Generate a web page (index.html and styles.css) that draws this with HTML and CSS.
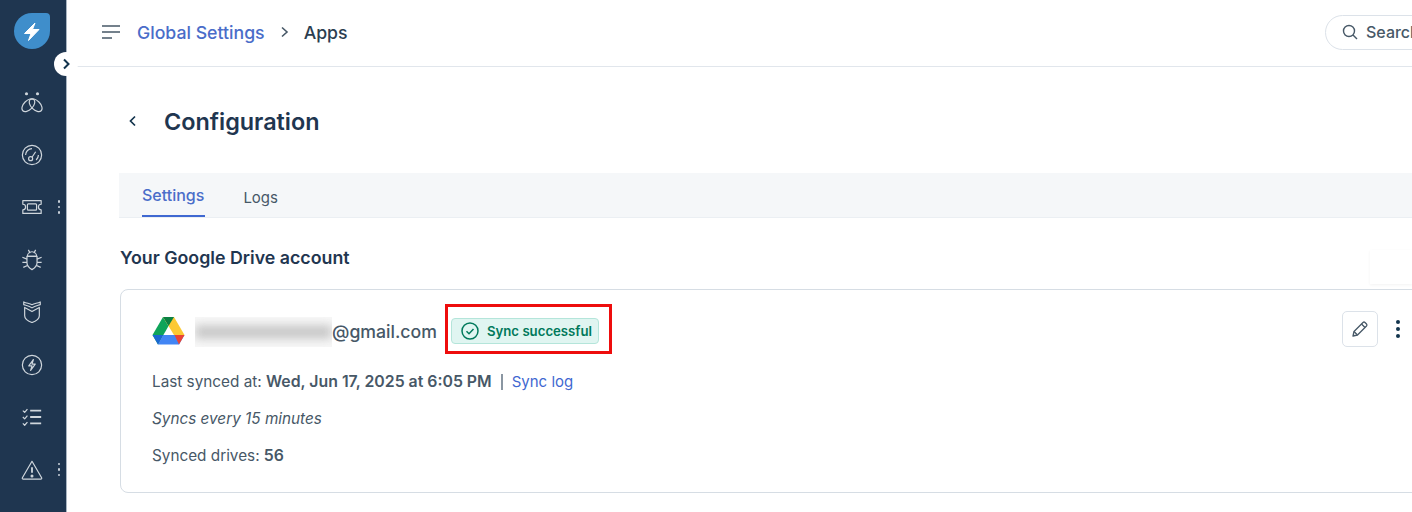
FILE: index.html
```html
<!DOCTYPE html>
<html lang="en">
<head>
    <meta charset="UTF-8">
    <title>Configuration</title>
    <link rel="stylesheet" href="styles.css">
</head>
<body>
    <div class="app">
        <aside class="sidebar">
            <svg class="logo" width="36" height="36" viewBox="0 0 36 36">
                <path d="M18 0h14a4 4 0 0 1 4 4v14a18 18 0 1 1-18-18z" fill="#3f8ecb"/>
                <path d="M21 10l-10.500 10.500h6.500l-2.500 7 10.500-11h-6.500z" fill="#fff" stroke="#fff" stroke-width="1" stroke-linejoin="round"/>
            </svg>
            <nav class="nav">
                <div class="nav-item">
                    <svg viewBox="0 0 24 24"><circle cx="6" cy="3" r="1.700" fill="currentColor" stroke="none"/><circle cx="18" cy="3" r="1.700" fill="currentColor" stroke="none"/><ellipse cx="8" cy="15.500" rx="8.500" ry="5" transform="rotate(-45 8 15.500)"/><ellipse cx="16" cy="15.500" rx="8.500" ry="5" transform="rotate(45 16 15.500)"/></svg>
                </div>
                <div class="nav-item">
                    <svg viewBox="0 0 24 24"><circle cx="12" cy="12" r="10.500"/><path d="M5 12a7 7 0 0 1 7-7M19 12c0 2-1 4-2.500 5.500"/><circle cx="10.500" cy="16" r="2.200"/><path d="M12 14.500l4-6"/></svg>
                </div>
                <div class="nav-item has-more">
                    <svg viewBox="0 0 24 24"><path d="M2 5h20v4a3 3 0 0 0 0 6v4H2v-4a3 3 0 0 0 0-6z"/><rect x="7" y="8.500" width="10" height="7" rx="1"/></svg>
                    <span class="more"><i></i><i></i><i></i></span>
                </div>
                <div class="nav-item">
                    <svg viewBox="0 0 24 24"><path d="M8 1l2 3.500M16 1l-2 3.500"/><path d="M7 8a5 5 0 0 1 10 0z"/><path d="M6.500 8h11v7c0 4-3 6-5.500 7.500C9.500 21 6.500 19 6.500 15z"/><path d="M6.500 11L1.500 9M17.500 11L22.500 9M6.500 14.500H1.500M17.500 14.500H22.500M7 18l-4.500 2M17 18l4.500 2"/></svg>
                </div>
                <div class="nav-item">
                    <svg viewBox="0 0 24 24"><path d="M3 1c3 1.500 6 1.500 9 3 3-1.500 6-1.500 9-3v3c-3 1-6 1.500-9 3.500C9 5.500 6 5 3 4z"/><path d="M4 7v9c0 3 4 6 8 7.500 4-1.500 8-4.500 8-7.500V7l-8 4.500z"/></svg>
                </div>
                <div class="nav-item">
                    <svg viewBox="0 0 24 24"><circle cx="12" cy="12" r="10.500"/><path d="M13.500 6l-5 7h3.500l-1.500 5 5-7H12z"/></svg>
                </div>
                <div class="nav-item">
                    <svg viewBox="0 0 24 24"><path d="M2 5l2 2 3-3.500M2 12l2 2 3-3.500M2 19l2 2 3-3.500"/><path d="M10 5h12M10 12h12M10 19h12" stroke-width="2"/></svg>
                </div>
                <div class="nav-item has-more">
                    <svg viewBox="0 0 24 24"><path d="M12 2.500L1.500 20.500a1 1 0 0 0 1 1.500h19a1 1 0 0 0 1-1.500z"/><path d="M12 9v6" stroke-width="2"/><circle cx="12" cy="18.500" r="1" fill="currentColor"/></svg>
                    <span class="more"><i></i><i></i><i></i></span>
                </div>
            </nav>
        </aside>
        <button class="toggle">
            <svg width="10" height="12" viewBox="0 0 10 12"><path d="M3 1.500L7.500 6 3 10.500" fill="none" stroke="#12344d" stroke-width="2"/></svg>
        </button>

        <div class="content">
            <header class="topbar">
                <svg class="menu-icon" width="20" height="16" viewBox="0 0 20 16"><path d="M1 2h18M1 8h18M1 14h10" fill="none" stroke="#475867" stroke-width="1.600"/></svg>
                <a class="crumb-link">Global Settings</a>
                <svg class="crumb-sep" width="10" height="12" viewBox="0 0 10 12"><path d="M2 1.500L7 6l-5 4.500" fill="none" stroke="#475867" stroke-width="1.600"/></svg>
                <span class="crumb-current">Apps</span>
                <div class="search">
                    <svg width="16" height="16" viewBox="0 0 16 16"><circle cx="7" cy="7" r="5.500" fill="none" stroke="#475867" stroke-width="1.400"/><path d="M11 11l4 4" stroke="#475867" stroke-width="1.400"/></svg>
                    <span>Search</span>
                </div>
            </header>

            <main class="main">
                <div class="page-title">
                    <svg width="10" height="12" viewBox="0 0 10 12"><path d="M7 1.500L2.500 6 7 10.500" fill="none" stroke="#12344d" stroke-width="1.700"/></svg>
                    <h1>Configuration</h1>
                </div>

                <div class="tabs">
                    <a class="tab active">Settings</a>
                    <a class="tab">Logs</a>
                </div>

                <h2>Your Google Drive account</h2>

                <section class="card">
                    <div class="account-row">
                        <svg class="drive" width="33" height="29" viewBox="0 0 33 29">
                            <path d="M11 1L.5 19l5.500 9.500L16.500 10z" fill="#0fa45a"/>
                            <path d="M11 1h11l10.500 18H22L16.500 10z" fill="#fcc934"/>
                            <path d="M11 1h11l-5.500 9z" fill="#0b8043"/>
                            <path d="M6 28.500L11 19h21.500l-5.500 9.500z" fill="#4285f4"/>
                            <path d="M.5 19H11l-5 9.500z" fill="#1967d2"/>
                            <path d="M32.500 19H22.500l4.500 9.500z" fill="#ea4335"/>
                        </svg>
                        <span class="masked"><span class="smear"></span></span>
                        <span class="email">@gmail.com</span>
                        <div class="highlight">
                            <span class="badge">
                                <svg width="18" height="18" viewBox="0 0 18 18"><circle cx="9" cy="9" r="8" fill="none" stroke="#00795b" stroke-width="1.500"/><path d="M5.500 9.300l2.500 2.400 4.500-4.700" fill="none" stroke="#00795b" stroke-width="1.500"/></svg>
                                Sync successful
                            </span>
                        </div>
                        <div class="actions">
                            <button class="edit">
                                <svg width="18" height="18" viewBox="0 0 18 18"><path d="M2 16l1-4.500L12 2.500a1.500 1.500 0 0 1 2 0l1.500 1.500a1.500 1.500 0 0 1 0 2L6.500 15z" fill="none" stroke="#475867" stroke-width="1.300" stroke-linejoin="round"/><path d="M10.500 4l3.500 3.500M3 11.500L6.500 15" fill="none" stroke="#475867" stroke-width="1.300"/></svg>
                            </button>
                            <span class="kebab"><i></i><i></i><i></i></span>
                        </div>
                    </div>
                    <p class="line">Last synced at: <b>Wed, Jun 17, 2025 at 6:05 PM</b><span class="sep"></span><a class="link">Sync log</a></p>
                    <p class="line"><em>Syncs every 15 minutes</em></p>
                    <p class="line">Synced drives: <b>56</b></p>
                </section>
            </main>
        </div>
        <div class="ghost"></div>
    </div>
</body>
</html>
```

FILE: styles.css
```css
html, body {
    margin: 0;
    height: 100%;
    background: #fff;
    overflow: hidden;
}

body {
    font-family: Inter, "Liberation Sans", sans-serif;
    color: #12344d;
}

.app {
    display: flex;
    height: 512px;
    position: relative;
}

.sidebar {
    width: 66px;
    flex-shrink: 0;
    background: #1f3650;
    border-right: 1px solid #a9b5c2;
    display: flex;
    flex-direction: column;
    align-items: center;
    padding-top: 13px;
}

.logo {
    display: block;
    margin-right: 3px;
}

.nav {
    display: flex;
    flex-direction: column;
    gap: 30.5px;
    margin-top: 42px;
    width: 100%;
}

.nav-item {
    height: 22px;
    padding-right: 3px;
    display: flex;
    align-items: center;
    justify-content: center;
    position: relative;
    color: #cfd6dc;
}

.nav-item svg {
    width: 22px;
    height: 22px;
    fill: none;
    stroke: currentColor;
    stroke-width: 1.3;
    stroke-linejoin: round;
}

.more {
    position: absolute;
    right: 6px;
    top: 4px;
    display: flex;
    flex-direction: column;
    gap: 3px;
}

.more i {
    display: block;
    width: 2.5px;
    height: 2.5px;
    border-radius: 50%;
    background: #c8d0d8;
}

.toggle {
    position: absolute;
    left: 54px;
    top: 52px;
    width: 24px;
    height: 24px;
    padding: 0;
    border: none;
    border-radius: 50%;
    background: #fff;
    display: flex;
    align-items: center;
    justify-content: center;
}

.ghost {
    position: absolute;
    right: 0;
    top: 250px;
    width: 42px;
    height: 34px;
    background: #fff;
    box-shadow: 0 1px 3px rgba(0, 0, 0, 0.05);
}

.content {
    flex: 1;
    min-width: 0;
}

.topbar {
    height: 64px;
    margin-left: 10px;
    border-bottom: 1px solid #e1e6ec;
    display: flex;
    align-items: center;
    padding: 0 0 2px 24px;
}

.menu-icon {
    margin-right: 16px;
}

.crumb-link {
    font-size: 17.7px;
    font-weight: 500;
    color: #4a6dc9;
}

.crumb-sep {
    margin: 0 14px 0 15px;
}

.crumb-current {
    font-size: 17.7px;
    font-weight: 500;
    color: #2c3e50;
}

.search {
    margin-left: auto;
    margin-right: -77px;
    width: 164px;
    height: 35px;
    box-sizing: border-box;
    border: 1.5px solid #dce2e9;
    border-radius: 18px;
    display: flex;
    align-items: center;
    gap: 8px;
    padding-left: 16px;
    font-size: 16px;
    font-weight: 500;
    color: #475867;
    flex-shrink: 0;
}

.main {
    padding-left: 52px;
}

.page-title {
    height: 104px;
    padding: 2px 0 0 9px;
    display: flex;
    align-items: center;
    gap: 26px;
}

.page-title h1 {
    margin: 0;
    font-size: 23.4px;
    font-weight: 600;
    color: #1f3650;
}

.tabs {
    height: 45px;
    background: #f5f7f9;
    border-bottom: 1px solid #ebeff3;
    display: flex;
    gap: 38px;
    padding-left: 23px;
    box-sizing: border-box;
}

.tab {
    font-size: 15px;
    color: #475867;
    padding-top: 15px;
}

.tab.active {
    color: #4a6dc9;
    font-size: 16px;
    font-weight: 500;
    padding: 12px 1px 0 0;
    height: 44px;
    box-sizing: border-box;
    border-bottom: 2px solid #3f68d1;
}

.main h2 {
    margin: 0;
    padding: 29px 0 21px 1px;
    font-size: 17.8px;
    line-height: 21px;
    font-weight: 600;
    color: #1f3650;
}

.card {
    margin-left: 1px;
    margin-right: -20px;
    height: 204px;
    box-sizing: border-box;
    border: 1px solid #d6dde4;
    border-radius: 8px;
    padding: 14px 32px 0 31px;
}

.account-row {
    display: flex;
    align-items: center;
    height: 50px;
}

.drive {
    margin-top: 3px;
}

.masked {
    width: 137px;
    height: 30px;
    margin: 6px 0 0 10px;
    background: #f8f8f8;
    overflow: hidden;
    display: flex;
    align-items: center;
}

.smear {
    display: block;
    width: 100%;
    height: 14px;
    background: #c9c9c9;
    filter: blur(5px);
}

.email {
    margin-top: 4px;
    font-size: 17.7px;
    font-weight: 500;
    color: #475867;
}

.highlight {
    margin-left: 8px;
    height: 50px;
    box-sizing: border-box;
    border: 3px solid #ee0d0d;
    padding: 11px 10px 0 3px;
}

.badge {
    display: flex;
    align-items: center;
    gap: 8px;
    width: 148px;
    height: 26px;
    box-sizing: border-box;
    padding-left: 9px;
    background: #e0f5f1;
    border: 1px solid #b4e5da;
    border-radius: 4px;
    font-size: 13.2px;
    font-weight: 600;
    color: #00795b;
}

.actions {
    margin-left: auto;
    margin-right: -1px;
    display: flex;
    align-items: center;
    gap: 18px;
}

.edit {
    width: 36px;
    height: 36px;
    padding: 0;
    background: #fff;
    border: 1px solid #dce2e9;
    border-radius: 5px;
    display: flex;
    align-items: center;
    justify-content: center;
}

.kebab {
    display: flex;
    flex-direction: column;
    gap: 3px;
}

.kebab i {
    display: block;
    width: 4px;
    height: 4px;
    border-radius: 50%;
    background: #12344d;
}

.line {
    margin: 0 0 17px;
    font-size: 15.3px;
    line-height: 20px;
    color: #475867;
}

.account-row + .line {
    margin-top: 18px;
}

.line b {
    font-size: 15.85px;
    font-weight: 600;
}

.sep {
    display: inline-block;
    width: 2px;
    height: 16px;
    background: #8a96a2;
    margin: 0 9px;
    vertical-align: -3px;
}

.link {
    font-size: 15px;
    color: #3f68d1;
}
```
